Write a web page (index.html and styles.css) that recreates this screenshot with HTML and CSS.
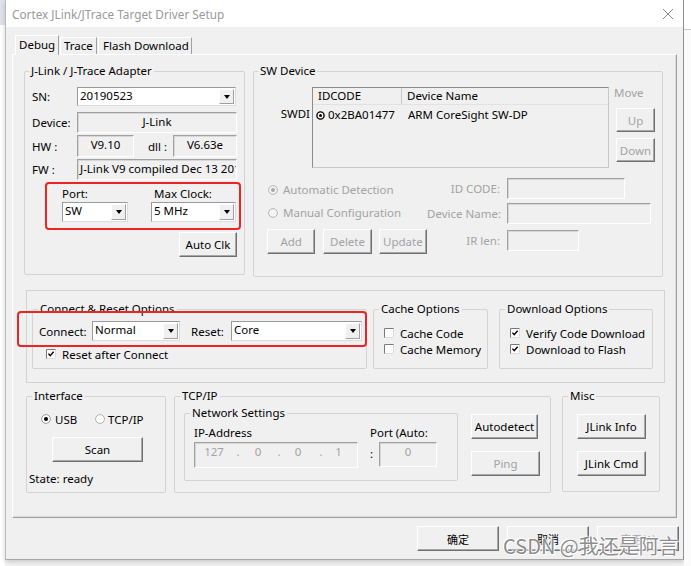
FILE: index.html
```html
<!DOCTYPE html>
<html lang="en">
<head>
<meta charset="utf-8">
<title>Cortex JLink/JTrace Target Driver Setup</title>
<link rel="stylesheet" href="styles.css">
</head>
<body>
<div class="desk-left"></div>
<div class="window">
  <div class="titlebar">
    <span class="title">Cortex JLink/JTrace Target Driver Setup</span>
    <svg class="close" width="12" height="12" viewBox="0 0 12 12"><path d="M1 1L11 11M11 1L1 11" stroke="#8a8a8a" stroke-width="1" fill="none"/></svg>
  </div>
  <div class="client">
    <div class="tabs">
      <div class="tab tab-debug active">Debug</div>
      <div class="tab tab-trace">Trace</div>
      <div class="tab tab-flash">Flash Download</div>
    </div>
    <div class="panel">
      <div class="row-top">
        <div class="group adapter">
          <div class="legend legend-tight">J-Link / J-Trace Adapter</div>
          <div class="frow r-sn"><span class="lbl">SN:</span><div class="combo w159"><span class="val">20190523</span><span class="drop"></span></div></div>
          <div class="frow r-dev"><span class="lbl">Device:</span><div class="field w160 center">J-Link</div></div>
          <div class="frow r-hw"><span class="lbl">HW :</span><div class="field w57 center">V9.10</div><span class="lbl lbl-dll">dll :</span><div class="field w64 center">V6.63e</div></div>
          <div class="frow r-fw"><span class="lbl">FW :</span><div class="field w160 clip">J-Link V9 compiled Dec 13 2018 16:37:26</div></div>
          <div class="frow r-portlbl"><span class="lbl-port">Port:</span><span>Max Clock:</span></div>
          <div class="frow r-port"><div class="combo w66 port-combo"><span class="val">SW</span><span class="drop"></span></div><div class="combo w85 clock-combo"><span class="val">5 MHz</span><span class="drop"></span></div></div>
          <div class="frow r-auto"><button class="btn autoclk">Auto Clk</button></div>
        </div>
        <div class="group swdev">
          <div class="legend legend-tight">SW Device</div>
          <div class="sw-top">
            <span class="swdi">SWDI</span>
            <div class="devlist">
              <div class="dl-head"><span class="c1">IDCODE</span><span class="c2">Device Name</span></div>
              <div class="dl-row">
                <span class="c1"><svg class="sel" width="9" height="9" viewBox="0 0 9 9"><circle cx="4.5" cy="4.5" r="3.6" fill="#fff" stroke="#000" stroke-width="1.4"/><circle cx="4.5" cy="4.5" r="1.5" fill="#000"/></svg>0x2BA01477</span>
                <span class="c2">ARM CoreSight SW-DP</span>
              </div>
            </div>
            <div class="move">
              <span class="move-lbl">Move</span>
              <button class="btn dis move-up">Up</button>
              <button class="btn dis move-down">Down</button>
            </div>
          </div>
          <div class="sw-bottom">
            <div class="radio-line rl-1"><svg class="radio" width="10" height="10" viewBox="0 0 10 10"><circle cx="5" cy="5" r="4.4" fill="#f4f4f4" stroke="#b4b4b4"/><circle cx="5" cy="5" r="2" fill="#a8a8a8"/></svg>Automatic Detection</div>
            <span class="lbl-r">ID CODE:</span>
            <div class="field w118"></div>
            <div class="radio-line rl-2"><svg class="radio" width="10" height="10" viewBox="0 0 10 10"><circle cx="5" cy="5" r="4.4" fill="#f4f4f4" stroke="#b4b4b4"/></svg>Manual Configuration</div>
            <span class="lbl-r">Device Name:</span>
            <div class="field w144"></div>
            <div class="sw-btns"><button class="btn dis w52">Add</button><button class="btn dis w52 b-del">Delete</button><button class="btn dis w52 b-upd">Update</button></div>
            <span class="lbl-r">IR len:</span>
            <div class="field w72"></div>
          </div>
        </div>
      </div>

      <div class="frame">
        <div class="group cr">
          <div class="legend">Connect &amp; Reset Options</div>
          <div class="cr-row">
            <span class="lbl-connect">Connect:</span>
            <div class="combo w88"><span class="val">Normal</span><span class="drop"></span></div>
            <span class="lbl-reset">Reset:</span>
            <div class="combo w131"><span class="val">Core</span><span class="drop"></span></div>
          </div>
          <div class="cb-row cr-cb"><svg class="cb" width="10" height="10" viewBox="0 0 10 10"><rect x="0" y="0" width="10" height="10" fill="#fff"/><path d="M0.5 10V0.5H10" stroke="#7a7a7a" fill="none"/><path d="M9.5 0.5V9.5H0.5" stroke="#dcdcdc" fill="none"/><path d="M2.4 4.6L4.2 6.6L7.6 2.8" stroke="#000" stroke-width="1.4" fill="none"/></svg>Reset after Connect</div>
        </div>
        <div class="group cache">
          <div class="legend">Cache Options</div>
          <div class="cb-row first"><svg class="cb" width="10" height="10" viewBox="0 0 10 10"><rect x="0" y="0" width="10" height="10" fill="#fff"/><path d="M0.5 10V0.5H10" stroke="#7a7a7a" fill="none"/><path d="M9.5 0.5V9.5H0.5" stroke="#dcdcdc" fill="none"/></svg>Cache Code</div>
          <div class="cb-row"><svg class="cb" width="10" height="10" viewBox="0 0 10 10"><rect x="0" y="0" width="10" height="10" fill="#fff"/><path d="M0.5 10V0.5H10" stroke="#7a7a7a" fill="none"/><path d="M9.5 0.5V9.5H0.5" stroke="#dcdcdc" fill="none"/></svg>Cache Memory</div>
        </div>
        <div class="group download">
          <div class="legend">Download Options</div>
          <div class="cb-row first"><svg class="cb" width="10" height="10" viewBox="0 0 10 10"><rect x="0" y="0" width="10" height="10" fill="#fff"/><path d="M0.5 10V0.5H10" stroke="#7a7a7a" fill="none"/><path d="M9.5 0.5V9.5H0.5" stroke="#dcdcdc" fill="none"/><path d="M2.4 4.6L4.2 6.6L7.6 2.8" stroke="#000" stroke-width="1.4" fill="none"/></svg>Verify Code Download</div>
          <div class="cb-row"><svg class="cb" width="10" height="10" viewBox="0 0 10 10"><rect x="0" y="0" width="10" height="10" fill="#fff"/><path d="M0.5 10V0.5H10" stroke="#7a7a7a" fill="none"/><path d="M9.5 0.5V9.5H0.5" stroke="#dcdcdc" fill="none"/><path d="M2.4 4.6L4.2 6.6L7.6 2.8" stroke="#000" stroke-width="1.4" fill="none"/></svg>Download to Flash</div>
        </div>
      </div>

      <div class="row-bottom">
        <div class="group iface">
          <div class="legend">Interface</div>
          <div class="if-radios">
            <span class="opt opt-usb"><svg class="radio" width="10" height="10" viewBox="0 0 10 10"><circle cx="5" cy="5" r="4.4" fill="#fff" stroke="#9a9a9a"/><circle cx="5" cy="5" r="2" fill="#000"/></svg>USB</span>
            <span class="opt opt-tcp"><svg class="radio" width="10" height="10" viewBox="0 0 10 10"><circle cx="5" cy="5" r="4.4" fill="#fff" stroke="#b0b0b0"/></svg>TCP/IP</span>
          </div>
          <button class="btn scan">Scan</button>
          <div class="state">State: ready</div>
        </div>
        <div class="group tcpip">
          <div class="legend">TCP/IP</div>
          <div class="tcp-inner">
            <div class="group netset">
              <div class="legend">Network Settings</div>
              <div class="ns-grid">
                <span class="ns-lbl">IP-Address</span>
                <span class="ns-lbl">Port (Auto:</span>
                <div class="field ipbox">
                  <span>127</span><span>.</span><span>0</span><span>.</span><span>0</span><span>.</span><span>1</span>
                </div>
                <div class="port-wrap"><span class="colon">:</span><div class="field portbox">0</div></div>
              </div>
            </div>
            <div class="tcp-btns">
              <button class="btn autodetect">Autodetect</button>
              <button class="btn dis ping">Ping</button>
            </div>
          </div>
        </div>
        <div class="group misc">
          <div class="legend">Misc</div>
          <div class="misc-btns">
            <button class="btn w69">JLink Info</button>
            <button class="btn w69">JLink Cmd</button>
          </div>
        </div>
      </div>
    </div>
    <div class="dlg-buttons">
      <button class="btn dlg">确定</button>
      <button class="btn dlg">取消</button>
      <button class="btn dlg dis">应用(A)</button>
    </div>
  </div>
</div>
<div class="desk-right"></div>

<div class="hl hl-port"></div>
<div class="hl hl-connect"></div>
<div class="watermark">CSDN @我还是阿言</div>
</body>
</html>
```

FILE: styles.css
```css
* { box-sizing: border-box; }
html, body { margin: 0; padding: 0; }
body {
  width: 691px;
  height: 566px;
  overflow: hidden;
  display: flex;
  align-items: flex-start;
  background: #f4f4f4;
  font-family: "Noto Sans", "Noto Sans CJK SC", sans-serif;
  font-size: 11.5px;
  color: #000;
  position: relative;
}
.desk-left { width: 5px; height: 566px; background: linear-gradient(#dfe4ea 0 25px, #fff 25px); }
.desk-right { flex: 1; height: 566px; background: linear-gradient(#fff 0 29px, #c9c9c9 29px 30px, #fbfbfb 30px); }

.window {
  width: 679px;
  height: 560px;
  display: flex;
  flex-direction: column;
  background: #f0f0f0;
  border-left: 1px solid #b9b9b9;
  border-right: 1px solid #8f8f8f;
  border-bottom: 1px solid #a5a5a5;
  box-shadow: 0 2px 5px rgba(0,0,0,0.18);
}
.titlebar { height: 27px; flex: none; background: #fff; display: flex; align-items: center; padding-left: 6px; }
.title { flex: 1; color: #999; font-size: 11.75px; }
.close { margin-right: 9px; }

.client { flex: 1; padding-left: 6px; }
.tabs { height: 27px; display: flex; align-items: flex-end; padding-left: 3px; }
.tab {
  height: 17px;
  line-height: 16px;
  padding-left: 3px;
  background: #f0f0f0;
  border-top: 1px solid #fff;
  border-left: 1px solid #fff;
  border-right: 1px solid #a0a0a0;
  white-space: nowrap;
}
.tab.active { height: 20px; line-height: 18px; margin-bottom: -1px; position: relative; z-index: 1; }
.tab-debug { width: 44px; }
.tab-trace { width: 37px; margin-left: 1px; }
.tab-flash { width: 94px; margin-left: 1px; padding-left: 4px; }

.panel {
  width: 665px;
  height: 464px;
  border: 1px solid;
  border-color: #fff #a0a0a0 #a0a0a0 #fff;
  box-shadow: inset -1px -1px 0 #dadada;
  padding: 16px 0 0 11px;
}

.group { border: 1px solid #d3d3d3; border-radius: 2px; }
.legend {
  width: max-content;
  margin: -8px 0 0 5px;
  padding: 0 2px;
  line-height: 14px;
  background: #f0f0f0;
  white-space: nowrap;
}
.legend-tight { margin-left: 4px; }

.btn {
  font: inherit;
  color: #000;
  background: #f0f0f0;
  border: 1px solid;
  border-color: #fff #707070 #707070 #fff;
  box-shadow: inset -1px -1px 0 #a8a8a8;
  padding: 0;
  height: 25px;
  white-space: nowrap;
}
.btn.dis { color: #a3a3a3; }

.field {
  background: #f0f0f0;
  border: 1px solid;
  border-color: #a0a0a0 #fff #fff #a0a0a0;
  box-shadow: inset 1px 1px 0 #d7d7d7;
  align-self: stretch;
  line-height: 18px;
  white-space: nowrap;
}
.field.center { text-align: center; }
.field.clip { overflow: hidden; padding-left: 2px; }

.combo {
  display: flex;
  align-items: stretch;
  align-self: stretch;
  background: #fff;
  border: 1px solid;
  border-color: #9a9a9a #dcdcdc #dcdcdc #9a9a9a;
}
.combo .val { flex: 1; padding-left: 2px; line-height: 16px; white-space: nowrap; overflow: hidden; }
.drop {
  width: 15px;
  margin: 1px;
  background: #f0f0f0;
  border: 1px solid;
  border-color: #fff #a0a0a0 #a0a0a0 #fff;
  display: flex;
  align-items: center;
  justify-content: center;
}
.drop::after {
  content: "";
  border-left: 3.5px solid transparent;
  border-right: 3.5px solid transparent;
  border-top: 4px solid #000;
}

.w52 { width: 52px; }
.w57 { width: 57px; }
.w64 { width: 64px; }
.w66 { width: 66px; }
.w69 { width: 69px; }
.w72 { width: 72px; }
.w85 { width: 85px; }
.w88 { width: 88px; }
.w118 { width: 118px; }
.w131 { width: 131px; }
.w144 { width: 144px; }
.w159 { width: 159px; }
.w160 { width: 160px; }

/* row 1 */
.row-top { display: flex; gap: 8px; }
.adapter { width: 221px; height: 204px; }
.frow { display: flex; align-items: center; padding-left: 7px; }
.lbl { width: 45px; flex: none; }
.lbl-dll { width: 25px; margin-left: 14px; }
.r-sn { margin-top: 9px; height: 19px; }
.r-dev { margin-top: 6px; height: 21px; }
.r-hw { margin-top: 2px; height: 22px; }
.r-fw { margin-top: 2px; height: 21px; }
.r-portlbl { margin-top: 5px; height: 16px; }
.lbl-port { width: 92px; margin-left: 30px; }
.r-port { margin-top: 1px; height: 20px; }
.port-combo { margin-left: 30px; }
.clock-combo { margin-left: 23px; }
.r-auto { margin-top: 10px; height: 25px; }
.autoclk { width: 58px; margin-left: 147px; }

.swdev { width: 410px; height: 206px; }
.sw-top { display: flex; margin-top: 9px; height: 81px; }
.swdi { width: 58px; text-align: right; padding-right: 2px; padding-top: 19px; line-height: 16px; }
.devlist {
  width: 297px;
  height: 81px;
  border: 1px solid;
  border-color: #8c8c8c #c8c8c8 #c8c8c8 #8c8c8c;
}
.dl-head { display: flex; height: 17px; line-height: 16px; border-bottom: 1px solid #e2e2e2; }
.dl-head .c1 { width: 89px; padding-left: 5px; border-right: 1px solid #c9c9c9; }
.dl-head .c2 { padding-left: 5px; }
.dl-row { display: flex; margin-top: 2px; line-height: 16px; }
.dl-row .c1 { width: 89px; padding-left: 3px; display: flex; align-items: center; white-space: nowrap; }
.sel { margin-right: 3px; flex: none; }
.dl-row .c2 { padding-left: 6px; white-space: nowrap; }
.move { margin-left: 4px; display: flex; flex-direction: column; align-items: flex-start; }
.move-lbl { line-height: 12px; padding-left: 1px; color: #a3a3a3; }
.move .btn { width: 39px; height: 24px; margin-left: 3px; }
.move-up { margin-top: 9px; }
.move-down { margin-top: 6px; }

.sw-bottom {
  display: grid;
  grid-template-columns: 173px 73px auto;
  grid-template-rows: 25px 27px 25px;
  align-items: start;
  margin-top: 10px;
}
.radio-line { display: flex; align-items: center; height: 21px; padding-left: 14px; color: #a3a3a3; white-space: nowrap; }
.rl-1 { margin-top: 1px; }
.rl-2 { margin-top: -1px; }
.radio { margin-right: 5px; flex: none; }
.lbl-r { text-align: right; line-height: 21px; color: #a3a3a3; white-space: nowrap; }
.sw-bottom .field { height: 21px; margin-left: 7px; }
.sw-btns { display: flex; padding-left: 13px; margin-top: -1px; }
.b-del { margin-left: 8px; }
.b-upd { margin-left: 7px; }

/* frame */
.frame {
  width: 639px;
  height: 93px;
  margin: 13px 0 0 2px;
  border: 1px solid #d3d3d3;
  display: flex;
  align-items: flex-start;
  padding: 18px 0 0 5px;
}
.cr { width: 335px; height: 60px; }
.cache { width: 115px; height: 60px; margin-left: 6px; }
.download { width: 154px; height: 60px; margin-left: 11px; }
.cr-row { display: flex; align-items: center; height: 20px; margin-top: 5px; padding-left: 6px; }
.lbl-connect { width: 53px; }
.lbl-reset { width: 40px; margin-left: 11px; }
.cb-row { display: flex; align-items: center; height: 16px; padding-left: 10px; white-space: nowrap; }
.cb-row.first { margin-top: 9px; }
.cr-cb { margin-top: 5px; padding-left: 13px; }
.cb { margin-right: 6px; flex: none; }

/* bottom row */
.row-bottom { display: flex; align-items: flex-start; margin: 13px 0 0 2px; }
.iface { width: 140px; height: 97px; }
.tcpip { width: 377px; height: 97px; margin-left: 8px; }
.misc { width: 98px; height: 96px; margin-left: 11px; }
.if-radios { display: flex; align-items: center; height: 16px; margin-top: 8px; padding-left: 14px; white-space: nowrap; }
.opt { display: flex; align-items: center; }
.opt-usb { width: 54px; }
.opt-usb .radio { margin-right: 4px; }
.opt-tcp .radio { margin-right: 3px; }
.scan { display: block; width: 91px; margin: 10px 0 0 25px; }
.state { margin-top: 9px; padding-left: 2px; line-height: 16px; }

.tcp-inner { display: flex; align-items: flex-start; margin-top: 10px; padding-left: 9px; }
.netset { width: 274px; height: 68px; }
.ns-grid { display: grid; grid-template-columns: 164px auto; column-gap: 12px; margin-top: 5px; padding-left: 9px; }
.ns-lbl { line-height: 16px; white-space: nowrap; }
.ipbox {
  margin-top: 1px;
  height: 26px;
  display: grid;
  grid-template-columns: 38px 10px 30px 12px 26px 20px 15px;
  justify-items: center;
  line-height: 16px;
  padding-top: 1px;
  color: #a3a3a3;
}
.port-wrap { display: flex; align-items: flex-start; margin-top: 1px; }
.colon { line-height: 16px; padding-top: 4px; }
.portbox { width: 58px; height: 25px; margin-left: 6px; text-align: center; line-height: 16px; padding-top: 1px; color: #a3a3a3; }
.tcp-btns { display: flex; flex-direction: column; align-items: flex-start; gap: 12px; margin: 1px 0 0 13px; }
.autodetect { width: 67px; }
.ping { width: 69px; }
.misc-btns { display: flex; flex-direction: column; align-items: flex-start; gap: 12px; margin-top: 11px; padding-left: 14px; }

/* dialog buttons */
.dlg-buttons { display: flex; justify-content: flex-end; gap: 8px; margin-top: 8px; padding-right: 4px; }
.dlg { width: 82px; font-family: "Noto Sans CJK SC", "Noto Sans", sans-serif; font-size: 11px; }

/* overlays */
.hl { position: absolute; border: 2px solid #ec2424; border-radius: 4px; }
.hl-port { left: 45px; top: 182px; width: 196px; height: 48px; }
.hl-connect { left: 17px; top: 311px; width: 350px; height: 36px; }
.watermark {
  position: absolute;
  left: 503px;
  top: 532px;
  font-family: "Noto Sans CJK SC", sans-serif;
  font-size: 20px;
  line-height: 28px;
  color: rgba(110,110,110,0.8);
  text-shadow: 0 0 1px #fff, 1px 1px 1px #fff, -1px -1px 1px #fff;
  white-space: nowrap;
}
```
